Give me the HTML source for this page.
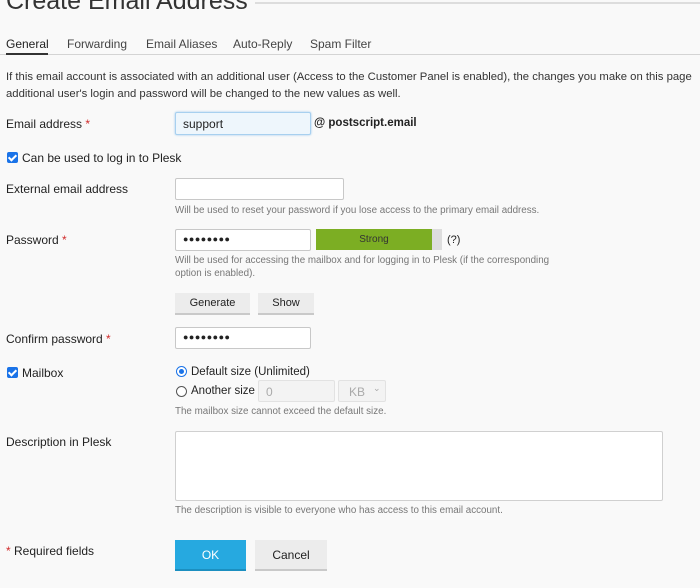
<!DOCTYPE html>
<html><head><style>
*{box-sizing:border-box;margin:0;padding:0}
body{width:700px;height:588px;background:#f9f9f9;font-family:"Liberation Sans",sans-serif;color:#222;font-size:12px;position:relative;overflow:hidden}
.a{position:absolute;white-space:nowrap}
.lbl{font-size:12px;line-height:14px}
.req{color:#d02b2b}
.inp{position:absolute;background:#fff;border:1px solid #c8c8c8;border-radius:2px}
.help{position:absolute;font-size:9.8px;color:#777;line-height:13px;white-space:nowrap}
.btn{position:absolute;background:#ececec;border-bottom:2px solid #c9c9c9;font-size:11px;text-align:center;color:#222}
.cb{position:absolute;width:11px;height:11px;background:#1a73e8;border-radius:2px}
.cb:after{content:"";position:absolute;left:3px;top:1px;width:3px;height:6px;border:solid #fff;border-width:0 2px 2px 0;transform:rotate(45deg)}
.dots{position:absolute;left:7px;top:4px;font-size:9px;letter-spacing:0.5px}
</style></head><body>
<div style="position:absolute;left:255px;top:2px;width:445px;height:2px;background:#ddd"></div>
<div class="a" style="left:6px;top:-13px;font-size:25px;color:#333">Create Email Address</div>
<div class="a" style="left:6px;top:37px;font-size:12px">General</div>
<div class="a" style="left:67px;top:37px;color:#444">Forwarding</div>
<div class="a" style="left:146px;top:37px;color:#444">Email Aliases</div>
<div class="a" style="left:233px;top:37px;color:#444">Auto-Reply</div>
<div class="a" style="left:310px;top:37px;color:#444">Spam Filter</div>
<div style="position:absolute;left:0;top:54px;width:700px;height:1px;background:#d4d4d4"></div>
<div style="position:absolute;left:6px;top:53px;width:42px;height:2px;background:#333"></div>
<div class="a" style="left:6px;top:69px;font-size:11.3px;line-height:17px;color:#333">If this email account is associated with an additional user (Access to the Customer Panel is enabled), the changes you make on this page<br>additional user's login and password will be changed to the new values as well.</div>

<div class="a lbl" style="left:6px;top:117px">Email address <span class="req">*</span></div>
<div class="inp" style="left:175px;top:112px;width:136px;height:23px;background:#eef6fc;border:1px solid #a8d0ef;box-shadow:0 0 2px #9cc8ee"><span style="position:absolute;left:7px;top:4px">support</span></div>
<div class="a" style="left:314px;top:117px;font-weight:bold;font-size:11.5px">@ postscript.email</div>

<div class="cb" style="left:7px;top:152px"></div>
<div class="a lbl" style="left:22px;top:151px">Can be used to log in to Plesk</div>

<div class="a lbl" style="left:6px;top:182px">External email address</div>
<div class="inp" style="left:175px;top:178px;width:169px;height:22px"></div>
<div class="help" style="left:175px;top:204px">Will be used to reset your password if you lose access to the primary email address.</div>

<div class="a lbl" style="left:6px;top:233px">Password <span class="req">*</span></div>
<div class="inp" style="left:175px;top:229px;width:136px;height:22px"><span class="dots">●●●●●●●●</span></div>
<div style="position:absolute;left:316px;top:229px;width:126px;height:21px;background:#ddd"></div>
<div style="position:absolute;left:316px;top:229px;width:116px;height:21px;background:#7cae23;font-size:10px;text-align:center;line-height:21px;color:#333">Strong</div>
<div class="a" style="left:447px;top:234px;font-size:11px">(?)</div>
<div class="help" style="left:175px;top:254px">Will be used for accessing the mailbox and for logging in to Plesk (if the corresponding<br>option is enabled).</div>
<div class="btn" style="left:175px;top:293px;width:75px;height:22px;line-height:21px">Generate</div>
<div class="btn" style="left:258px;top:293px;width:56px;height:22px;line-height:21px">Show</div>

<div class="a lbl" style="left:6px;top:332px">Confirm password <span class="req">*</span></div>
<div class="inp" style="left:175px;top:327px;width:136px;height:22px"><span class="dots">●●●●●●●●</span></div>

<div class="cb" style="left:7px;top:367px"></div>
<div class="a lbl" style="left:22px;top:366px">Mailbox</div>
<div style="position:absolute;left:176px;top:366px;width:11px;height:11px;border-radius:50%;border:1px solid #1a73e8;background:#fff"><div style="position:absolute;left:2px;top:2px;width:5px;height:5px;border-radius:50%;background:#1a73e8"></div></div>
<div class="a lbl" style="left:191px;top:365px;font-size:11.5px">Default size (Unlimited)</div>
<div style="position:absolute;left:176px;top:386px;width:11px;height:11px;border-radius:50%;border:1px solid #555;background:#fff"></div>
<div class="a lbl" style="left:191px;top:384px;font-size:11.5px">Another size</div>
<div class="inp" style="left:258px;top:380px;width:77px;height:22px;background:#f3f3f3;border-color:#e2e2e2"><span style="position:absolute;left:7px;top:4px;color:#aaa">0</span></div>
<div class="inp" style="left:338px;top:380px;width:48px;height:22px;background:#f3f3f3;border-color:#e2e2e2"><span style="position:absolute;left:10px;top:4px;color:#aaa">KB</span><span style="position:absolute;left:34px;top:2px;color:#aaa;font-size:9px">⌄</span></div>
<div class="help" style="left:175px;top:405px">The mailbox size cannot exceed the default size.</div>

<div class="a lbl" style="left:6px;top:435px">Description in Plesk</div>
<div class="inp" style="left:175px;top:431px;width:488px;height:70px;border-color:#d0d0d0"></div>
<div class="help" style="left:175px;top:504px">The description is visible to everyone who has access to this email account.</div>

<div class="a lbl" style="left:6px;top:544px"><span class="req">*</span> Required fields</div>
<div style="position:absolute;left:175px;top:540px;width:71px;height:31px;background:#26a9e0;border-bottom:2px solid #1b8fc0;color:#fff;text-align:center;line-height:30px">OK</div>
<div class="btn" style="left:255px;top:540px;width:72px;height:31px;line-height:30px;font-size:12px">Cancel</div>
</body></html>
